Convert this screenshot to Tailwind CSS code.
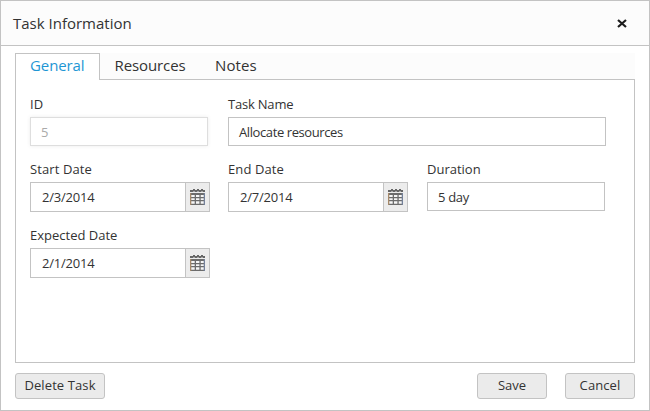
<!DOCTYPE html>
<html lang="en">
<head>
<meta charset="utf-8">
<title>Task Information</title>
<script src="https://cdn.jsdelivr.net/npm/@tailwindcss/browser@4"></script>
</head>
<body class="bg-white font-['Open_Sans','Noto_Sans',sans-serif] text-[#333]">
<svg class="hidden">
  <symbol id="calendar" viewBox="0 0 16 17">
    <path fill="#aaa" d="M0 2h15v2H0z"/>
    <path fill="#666" d="M0 2h3v2H0zM3 1h2v2H3zM5 2h2v2H5zM7 1h2v2H7zM9 2h2v2H9zM11 1h2v2h-2zM13 2h2v2h-2z"/>
    <path fill="#f6f6f6" d="M1 6h14v10H1z"/>
    <path fill="#6c6c6c" d="M0 5h15v2H0zM0 9h15v1.300H0zM0 12h15v1.300H0zM0 15.700h15V17H0zM4.700 7H6v9H4.700zM9.400 7h1.300v9H9.400z"/>
    <path fill="#a6896a" d="M0 5h1.300v12H0z"/>
    <path fill="#74819a" d="M13.700 5H15v12h-1.300z"/>
  </symbol>
</svg>
<div class="flex h-[411px] w-[650px] flex-col border border-[#c3c3c3] bg-white">
  <header class="flex h-[45px] shrink-0 items-center justify-between border-b border-[#c3c3c3] bg-[#fcfcfc] pl-3 pr-[22px]">
    <h1 class="text-[15px] leading-5">Task Information</h1>
    <button aria-label="Close"><svg class="block h-[9px] w-[10px]" viewBox="0 0 10 9"><path d="M1 1L9 8M9 1L1 8" stroke="#1c1c1c" stroke-width="2.200"/></svg></button>
  </header>
  <main class="mx-[14px] mt-[7px] flex h-[310px] shrink-0 flex-col">
    <nav class="flex h-[27px] shrink-0 bg-[#fcfcfc] text-[15px] leading-[23px]">
      <div class="w-[85px] border border-b-0 border-[#c3c3c3] bg-white pl-[14px] text-[#1e96d4] -tracking-[0.1px]"><span>General</span></div>
      <div class="w-[100px] border-b border-[#c3c3c3] pl-[14.5px] pt-px -tracking-[0.1px]"><span>Resources</span></div>
      <div class="flex-1 border-b border-[#c3c3c3] pl-[15px] pt-px tracking-[0.1px]"><span>Notes</span></div>
    </nav>
    <form class="flex flex-1 flex-col border border-t-0 border-[#c3c3c3] pl-[14px] pt-[15px] text-[13px]">
      <div class="flex h-[65px]">
        <div class="w-[198px]">
          <label class="block h-[22px] leading-[18px]">ID</label>
          <div class="h-[29px] w-[178px] border border-[#dedede] pl-[10px] leading-[28px] text-[#aaa] shadow-[0_0_4px_rgba(0,0,0,0.08)]"><span>5</span></div>
        </div>
        <div>
          <label class="block h-[22px] leading-[18px] -tracking-[0.2px]">Task Name</label>
          <div class="h-[29px] w-[378px] border border-[#c3c3c3] pl-[10px] leading-[28px] -tracking-[0.4px]"><span>Allocate resources</span></div>
        </div>
      </div>
      <div class="flex h-[66px]">
        <div class="w-[198px]">
          <label class="block h-[22px] leading-[18px] tracking-[0.1px]">Start Date</label>
          <div class="flex h-[30px] w-[180px] border border-[#c3c3c3]"><span class="w-[154px] pl-[11px] leading-[29px] -tracking-[0.2px]">2/3/2014</span><i class="flex flex-1 border-l border-[#c3c3c3] bg-[#ececec] pl-1 pt-[5px]"><svg class="h-[17px] w-4"><use href="#calendar"/></svg></i></div>
        </div>
        <div class="w-[199px]">
          <label class="block h-[22px] leading-[18px] tracking-[0.1px]">End Date</label>
          <div class="flex h-[30px] w-[180px] border border-[#c3c3c3]"><span class="w-[154px] pl-[11px] leading-[29px] -tracking-[0.2px]">2/7/2014</span><i class="flex flex-1 border-l border-[#c3c3c3] bg-[#ececec] pl-1 pt-[5px]"><svg class="h-[17px] w-4"><use href="#calendar"/></svg></i></div>
        </div>
        <div>
          <label class="block h-[22px] leading-[18px]">Duration</label>
          <div class="h-[29px] w-[178px] border border-[#c3c3c3] pl-[10px] leading-[29px] -tracking-[0.3px]"><span>5 day</span></div>
        </div>
      </div>
      <div>
        <label class="block h-[22px] leading-[18px]">Expected Date</label>
        <div class="flex h-[30px] w-[180px] border border-[#c3c3c3]"><span class="w-[154px] pl-[11px] leading-[29px] -tracking-[0.2px]">2/1/2014</span><i class="flex flex-1 border-l border-[#c3c3c3] bg-[#ececec] pl-1 pt-[5px]"><svg class="h-[17px] w-4"><use href="#calendar"/></svg></i></div>
      </div>
    </form>
  </main>
  <footer class="mx-[14px] mt-[10px] flex text-[13px] leading-[22px]">
    <button class="h-[26px] w-[90px] rounded-[3px] border border-[#c3c3c3] bg-[#ebebeb] pb-[2px] tracking-[0.1px]">Delete Task</button>
    <button class="ml-auto h-[26px] w-[70px] rounded-[3px] border border-[#c3c3c3] bg-[#ebebeb] pb-[2px]">Save</button>
    <button class="ml-[18px] h-[26px] w-[70px] rounded-[3px] border border-[#c3c3c3] bg-[#ebebeb] pb-[2px] tracking-[0.1px]">Cancel</button>
  </footer>
</div>
</body>
</html>
